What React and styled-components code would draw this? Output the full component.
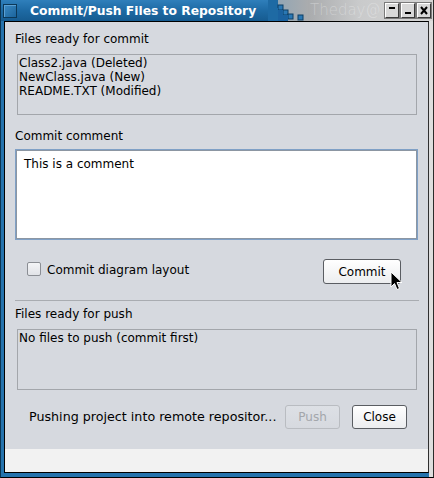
import React from "react";
import styled, { createGlobalStyle } from "styled-components";

const Global = createGlobalStyle`
  html, body { margin: 0; padding: 0; background: #ffffff; }
  body { font-family: "DejaVu Sans", "Liberation Sans", sans-serif; }
  * { box-sizing: border-box; }
`;

const Frame = styled.div`
  width: 434px;
  height: 478px;
  display: flex;
  flex-direction: column;
  border-left: 1px solid #0b3553;
  border-right: 1px solid #2b2b2b;
  border-bottom: 1px solid #000;
  background: #2573ad;
  position: relative;
  overflow: hidden;
`;

const TitleBar = styled.div`
  height: 21px;
  flex: none;
  display: flex;
  align-items: stretch;
`;

const TitleBlue = styled.div`
  width: 267px;
  flex: none;
  display: flex;
  align-items: center;
  padding-left: 2px;
  background: linear-gradient(to bottom, #2f7fbb 0%, #1e6aa4 50%, #165b90 100%);
`;

const AppIcon = styled.div`
  width: 14px;
  height: 14px;
  border: 1px solid #0c3858;
  background: linear-gradient(135deg, #3c8ac4, #1b649c);
  box-shadow: inset 1px 1px 0 #5aa0d4;
`;

const TitleText = styled.span`
  margin-left: 13px;
  color: #ffffff;
  font-weight: bold;
  font-size: 12.3px;
  line-height: 14px;
  white-space: nowrap;
`;

const Decor = styled.svg`
  flex: none;
  display: block;
`;

const TitleGray = styled.div`
  flex: 1;
  display: flex;
  align-items: center;
  padding-right: 4px;
  gap: 2px;
  background: linear-gradient(to right, #a9abad 0%, #c9cacb 40%, #d6d6d6 100%);
`;

const Watermark = styled.span`
  margin-left: 2px;
  font-family: "DejaVu Sans", sans-serif;
  font-weight: 200;
  font-size: 15px;
  line-height: 19px;
  color: rgba(255, 255, 255, 0.3);
  white-space: nowrap;
`;

const TitleSpacer = styled.div`
  flex: 1;
`;

const WinButton = styled.div`
  width: 14px;
  height: 15px;
  flex: none;
  background: #d8d8d8;
  border-top: 1px solid #ffffff;
  border-left: 1px solid #ffffff;
  border-right: 1px solid #3a3a3a;
  border-bottom: 1px solid #3a3a3a;
  box-shadow: 0 0 0 1px #7a7a7a;
  display: flex;
  align-items: center;
  justify-content: center;
`;

const BodyRow = styled.div`
  flex: 1;
  display: flex;
  padding-left: 3px;
  padding-bottom: 4px;
`;

const Client = styled.div`
  flex: 1;
  display: flex;
  flex-direction: column;
  border-top: 1px solid #000;
  border-left: 1px solid #000;
  border-bottom: 1px solid #000;
  border-right: 1px solid #303030;
  background: #d6d9df;
  color: #000;
  font-size: 12px;
  line-height: 14px;
`;

const RightEdge = styled.div`
  width: 4px;
  flex: none;
  background: #dedede;
  margin-bottom: -4px;
`;

const Content = styled.div`
  flex: 1;
  display: flex;
  flex-direction: column;
  padding: 10px 10px 0 10px;
  position: relative;
`;

const Label = styled.div`
  height: 14px;
  margin-top: ${(p) => p.$mt || 0}px;
  white-space: nowrap;
`;

const ListBox = styled.div`
  margin: 8px 1px 0 2px;
  height: 61px;
  border: 1px solid #a3a6ab;
  padding: 1px 1px;
`;

const ListItem = styled.div`
  height: 14px;
  white-space: nowrap;
`;

const TextArea = styled.div`
  margin-top: 6px;
  height: 91px;
  border: 1px solid #7fa0c6;
  box-shadow: inset 0 0 0 1px #8c96a2;
  background: #ffffff;
  padding: 7px 8px;
`;

const OptionsRow = styled.div`
  margin-top: 19px;
  display: flex;
  align-items: flex-start;
  padding-left: 12px;
  padding-right: 17px;
`;

const CheckBox = styled.div`
  width: 14px;
  height: 14px;
  margin-top: 3px;
  border: 1px solid #8b8e94;
  border-radius: 2px;
  background: linear-gradient(to bottom, #f4f5f7, #e1e3e7);
  flex: none;
`;

const CheckLabel = styled.span`
  margin-left: 6px;
  margin-top: 4px;
  white-space: nowrap;
`;

const Spacer = styled.div`
  flex: 1;
`;

const Button = styled.div`
  width: ${(p) => p.$w}px;
  height: ${(p) => p.$h}px;
  flex: none;
  display: flex;
  align-items: center;
  justify-content: center;
  border-radius: 3px;
  border: 1px solid ${(p) => (p.$disabled ? "#b9bcc1" : "#5a5d62")};
  color: ${(p) => (p.$disabled ? "#a3a6ab" : "#000")};
  background: ${(p) =>
    p.$disabled
      ? "linear-gradient(to bottom, #dde0e5, #d6d9df)"
      : "linear-gradient(to bottom, #ffffff, #ecedef)"};
  white-space: nowrap;
`;

const Separator = styled.div`
  margin-top: 16px;
  margin-right: -1px;
  height: 1px;
  background: #a9acb1;
`;

const BottomRow = styled.div`
  margin-top: 15px;
  display: flex;
  align-items: center;
  padding-left: 14px;
  padding-right: 11px;
`;

const PushText = styled.span`
  font-size: 12.7px;
  white-space: nowrap;
`;

const ButtonGap = styled.div`
  width: ${(p) => p.$w}px;
  flex: none;
`;

const BottomStrip = styled.div`
  height: 23px;
  flex: none;
  background: #f2f2f2;
`;

const Cursor = styled.svg`
  position: absolute;
  left: 385px;
  top: 249px;
`;

export default function App() {
  return (
    <>
      <Global />
      <Frame>
        <TitleBar>
          <TitleBlue>
            <AppIcon />
            <TitleText>Commit/Push Files to Repository</TitleText>
          </TitleBlue>
          <Decor width="40" height="21" viewBox="0 0 40 21">
            <defs>
              <linearGradient id="fade" x1="0" x2="1" y1="0" y2="0">
                <stop offset="0" stopColor="#8aa3b6" />
                <stop offset="1" stopColor="#aaacae" />
              </linearGradient>
            </defs>
            <rect x="0" y="0" width="40" height="21" fill="url(#fade)" />
            <rect x="0" y="0" width="6" height="21" fill="#1e6aa4" />
            <rect x="6" y="0" width="4" height="8" fill="#1e6aa4" />
            <rect x="10" y="5" width="5" height="5" fill="#2a78b4" stroke="#0d3f66" strokeWidth="1" />
            <rect x="15" y="10" width="5" height="5" fill="#2a78b4" stroke="#0d3f66" strokeWidth="1" />
            <rect x="20" y="14" width="5" height="5" fill="#2a78b4" stroke="#0d3f66" strokeWidth="1" />
            <rect x="30" y="15" width="5" height="5" fill="#2a78b4" stroke="#0d3f66" strokeWidth="1" />
            <rect x="6" y="8" width="4" height="13" fill="#1e6aa4" />
            <rect x="10" y="10" width="5" height="11" fill="#1b62a0" />
            <rect x="15" y="15" width="5" height="6" fill="#1b62a0" />
          </Decor>
          <TitleGray>
            <Watermark>Theday@</Watermark>
            <TitleSpacer />
            <WinButton>
              <svg width="8" height="9" viewBox="0 0 8 9">
                <rect x="1" y="1" width="6" height="2" fill="#000" />
              </svg>
            </WinButton>
            <WinButton>
              <svg width="8" height="9" viewBox="0 0 8 9">
                <rect x="1" y="6" width="6" height="2" fill="#000" />
              </svg>
            </WinButton>
            <WinButton>
              <svg width="8" height="9" viewBox="0 0 8 9">
                <path d="M1 1 L7 8 M7 1 L1 8" stroke="#000" strokeWidth="2" />
              </svg>
            </WinButton>
          </TitleGray>
        </TitleBar>
        <BodyRow>
          <Client>
            <Content>
              <Label>Files ready for commit</Label>
              <ListBox>
                <ListItem>Class2.java (Deleted)</ListItem>
                <ListItem>NewClass.java (New)</ListItem>
                <ListItem>README.TXT (Modified)</ListItem>
              </ListBox>
              <Label $mt={14}>Commit comment</Label>
              <TextArea>This is a comment</TextArea>
              <OptionsRow>
                <CheckBox />
                <CheckLabel>Commit diagram layout</CheckLabel>
                <Spacer />
                <Button $w={78} $h={25}>Commit</Button>
              </OptionsRow>
              <Separator />
              <Label $mt={6}>Files ready for push</Label>
              <ListBox>
                <ListItem>No files to push (commit first)</ListItem>
              </ListBox>
              <BottomRow>
                <PushText>Pushing project into remote repositor...</PushText>
                <Spacer />
                <Button $w={55} $h={24} $disabled>Push</Button>
                <ButtonGap $w={12} />
                <Button $w={55} $h={24}>Close</Button>
              </BottomRow>
              <Cursor width="14" height="20" viewBox="0 0 14 20">
                <path
                  d="M1 1 L1 16 L4.5 12.5 L7 18.5 L9.5 17.5 L7 11.5 L12 11.5 Z"
                  fill="#000"
                  stroke="#fff"
                  strokeWidth="1"
                  strokeLinejoin="round"
                />
              </Cursor>
            </Content>
            <BottomStrip />
          </Client>
          <RightEdge />
        </BodyRow>
      </Frame>
    </>
  );
}
